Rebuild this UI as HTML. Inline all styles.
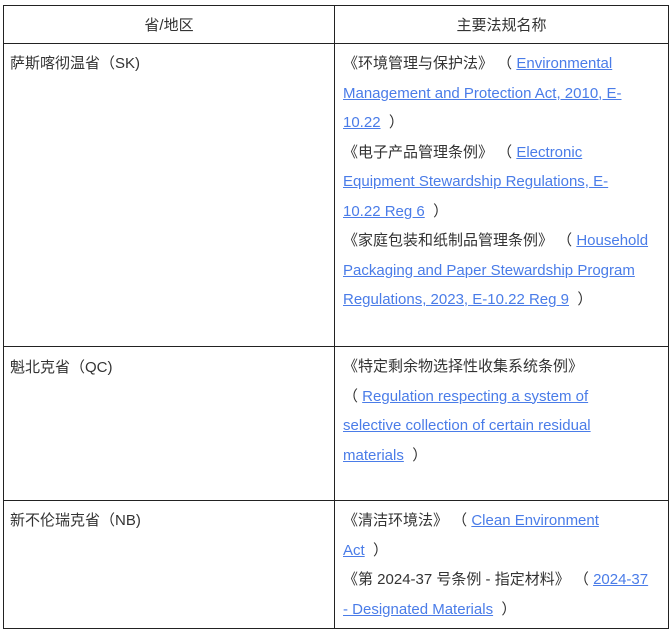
<!DOCTYPE html>
<html><head><meta charset="utf-8"><style>
html,body{margin:0;padding:0;background:#fff;width:671px;height:631px;overflow:hidden}
body{font-family:"Liberation Sans","Noto Sans CJK SC",sans-serif;font-size:15px;color:#333}
table{position:absolute;left:3px;top:5px;border-collapse:collapse;table-layout:fixed;width:665px}
td,th{border:1px solid #222;vertical-align:top;padding:0}
th{font-weight:normal;height:37px;text-align:center;vertical-align:middle}
.l{padding:8px 0 0 6px}
.r{padding:5px 0 0 8px;line-height:29.5px;white-space:nowrap}
a{color:#4a7ce8;text-decoration:underline}
</style></head><body>
<table>
<colgroup><col style="width:331px"><col style="width:334px"></colgroup>
<tr><th>省/地区</th><th>主要法规名称</th></tr>
<tr style="height:303px"><td class="l">萨斯喀彻温省（SK)</td><td class="r">《环境管理与保护法》 （ <a>Environmental </a><br><a>Management and Protection Act, 2010, E-</a><br><a>10.22</a> &nbsp;）<br>《电子产品管理条例》 （ <a>Electronic </a><br><a>Equipment Stewardship Regulations, E-</a><br><a>10.22 Reg 6</a> &nbsp;）<br>《家庭包装和纸制品管理条例》 （ <a>Household </a><br><a>Packaging and Paper Stewardship Program </a><br><a>Regulations, 2023, E-10.22 Reg 9</a> &nbsp;）</td></tr>
<tr style="height:154px"><td class="l" style="padding-top:9px">魁北克省（QC)</td><td class="r" style="padding-top:5px">《特定剩余物选择性收集系统条例》<br>（ <a>Regulation respecting a system of </a><br><a>selective collection of certain residual </a><br><a>materials</a> &nbsp;）</td></tr>
<tr style="height:128px"><td class="l">新不伦瑞克省（NB)</td><td class="r">《清洁环境法》 （ <a>Clean Environment </a><br><a>Act</a> &nbsp;）<br>《第 2024-37 号条例 - 指定材料》 （ <a>2024-37 </a><br><a>- Designated Materials</a> &nbsp;）</td></tr>
</table>
</body></html>
